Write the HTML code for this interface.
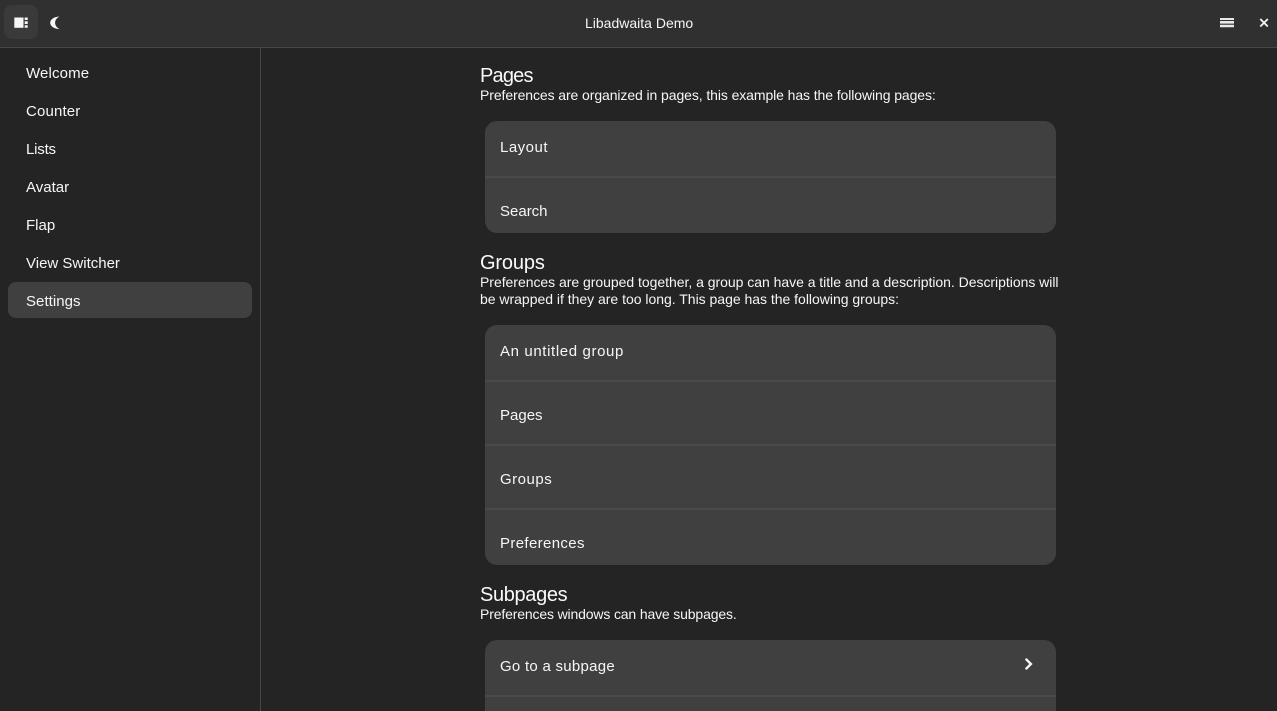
<!DOCTYPE html>
<html><head><meta charset="utf-8"><style>
html,body{margin:0;padding:0;width:1277px;height:711px;overflow:hidden;background:#242424;}
body{position:relative;font-family:"Liberation Sans",sans-serif;color:#fff;font-size:15px;}
.a{position:absolute;white-space:nowrap;}
.t{position:absolute;white-space:nowrap;line-height:20px;height:20px;color:#f6f6f6;}
.h{position:absolute;white-space:nowrap;font-size:20px;line-height:24px;color:#fafafa;}
.d{position:absolute;white-space:nowrap;font-size:14px;line-height:17px;color:#f6f6f6;}
.card{position:absolute;left:485px;width:571px;background:#404040;border-radius:12px;overflow:hidden;}
.sep{position:absolute;left:485px;width:571px;height:2px;background:#4a4a4a;}
</style></head><body>
<div class="a" style="left:0;top:0;width:1277px;height:47px;background:#303030;"></div>
<div class="a" style="left:0;top:47px;width:1277px;height:1px;background:#474747;"></div>
<div class="a" style="left:260px;top:48px;width:1px;height:663px;background:#474747;"></div>
<div class="a" style="left:4px;top:5px;width:34px;height:34px;border-radius:8px;background:#3a3a3a;"></div>
<svg class="a" style="left:0;top:0" width="1277" height="47" viewBox="0 0 1277 47">
<path d="M14.300 17.500h9.200v10.300h-9.200z" fill="#f6f6f6"/>
<path d="M24.700 17.500h3v2.500h-3zM24.700 21.200h3v2.800h-3zM24.700 25.200h3v2.600h-3z" fill="#f6f6f6"/>
<path d="M59.500 16.500c-5.500.2-9.300 2.900-9.300 6.300s3.800 6.100 9.300 6.300c-2.800-1.500-4.400-3.700-4.400-6.300s1.600-4.800 4.400-6.300z" fill="#f6f6f6"/>
<path d="M1220 18h14v2h-14zM1220 21h14v2.600h-14zM1220 24.700h14v2.600h-14z" fill="#e8e8e8"/>
<path d="M1260.300 19l7.500 7.500M1267.800 19l-7.500 7.500" stroke="#f6f6f6" stroke-width="1.800" fill="none"/>
</svg>
<div class="t" style="left:585px;top:13px;font-size:14px;">Libadwaita Demo</div>
<div class="a" style="left:8px;top:282px;width:244px;height:36px;background:#404040;border-radius:8px;"></div>
<div class="t" style="left:26px;top:64px;letter-spacing:.15px;">Welcome</div>
<div class="t" style="left:26px;top:102px;letter-spacing:.15px;">Counter</div>
<div class="t" style="left:26px;top:140px;letter-spacing:-.2px;">Lists</div>
<div class="t" style="left:26px;top:178px;">Avatar</div>
<div class="t" style="left:26px;top:216px;">Flap</div>
<div class="t" style="left:26px;top:254px;">View Switcher</div>
<div class="t" style="left:26px;top:292px;letter-spacing:.05px;">Settings</div>

<div class="h" style="left:480px;top:64px;letter-spacing:-.8px;">Pages</div>
<div class="d" style="left:480px;top:87px;letter-spacing:-.09px;">Preferences are organized in pages, this example has the following pages:</div>
<div class="card" style="top:121px;height:112px;"></div>
<div class="sep" style="top:176px;"></div>
<div class="t" style="left:500px;top:138px;letter-spacing:.5px;">Layout</div>
<div class="t" style="left:500px;top:202px;">Search</div>

<div class="h" style="left:480px;top:251px;letter-spacing:-.15px;">Groups</div>
<div class="d" style="left:480px;top:274px;letter-spacing:-.03px;">Preferences are grouped together, a group can have a title and a description. Descriptions will</div>
<div class="d" style="left:480px;top:291px;letter-spacing:-.015px;">be wrapped if they are too long. This page has the following groups:</div>
<div class="card" style="top:325px;height:240px;"></div>
<div class="sep" style="top:380px;"></div>
<div class="sep" style="top:444px;"></div>
<div class="sep" style="top:508px;"></div>
<div class="t" style="left:500px;top:342px;letter-spacing:.62px;">An untitled group</div>
<div class="t" style="left:500px;top:406px;">Pages</div>
<div class="t" style="left:500px;top:470px;letter-spacing:.5px;">Groups</div>
<div class="t" style="left:500px;top:534px;letter-spacing:.36px;">Preferences</div>

<div class="h" style="left:480px;top:583px;letter-spacing:-.35px;">Subpages</div>
<div class="d" style="left:480px;top:606px;letter-spacing:-.15px;">Preferences windows can have subpages.</div>
<div class="card" style="top:640px;height:90px;"></div>
<div class="sep" style="top:695px;"></div>
<div class="t" style="left:500px;top:657px;letter-spacing:.27px;">Go to a subpage</div>
<svg class="a" style="left:1020px;top:656px" width="16" height="16" viewBox="0 0 16 16"><path d="M5.700 2.800l5.200 5.200-5.200 5.200" stroke="#f6f6f6" stroke-width="2.400" fill="none"/></svg>
</body></html>
